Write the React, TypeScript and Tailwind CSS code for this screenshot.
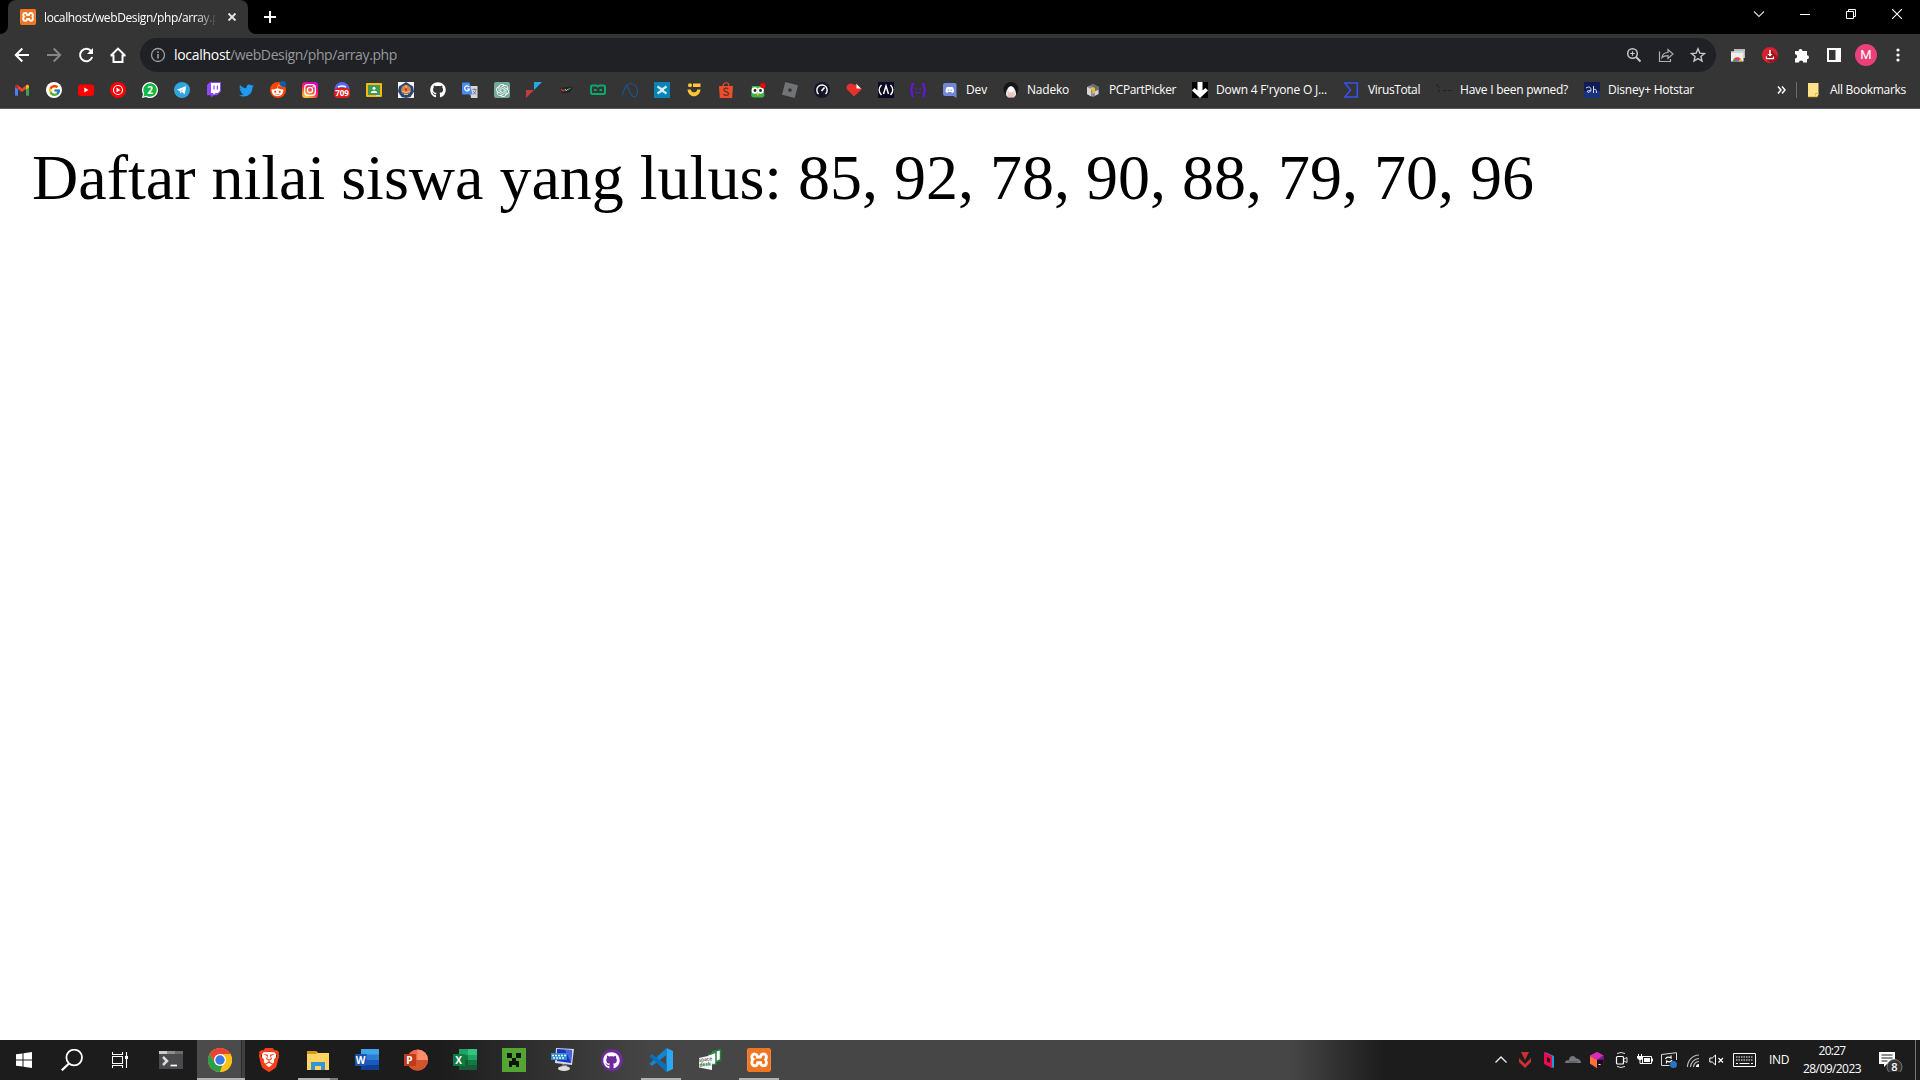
import React, { useLayoutEffect, useRef } from "react";
import { FcGoogle } from "react-icons/fc";
import { FaTwitter, FaGithub, FaRedditAlien } from "react-icons/fa";
import { SiXampp, SiOpenai, SiBrave } from "react-icons/si";

/** Single line of text whose tracking is adjusted so that it fills `w` pixels. */
function Fit({ w, className = "", children }: { w: number; className?: string; children: React.ReactNode }) {
  const ref = useRef<HTMLSpanElement>(null);
  useLayoutEffect(() => {
    const fit = () => {
      const el = ref.current;
      if (!el) return;
      el.style.letterSpacing = "0px";
      const n = (el.textContent || "").length;
      el.style.letterSpacing = (w - el.getBoundingClientRect().width) / n + "px";
    };
    fit();
    document.fonts?.ready.then(fit);
  }, [w]);
  return (
    <span ref={ref} className={"inline-block shrink-0 whitespace-pre " + className}>
      {children}
    </span>
  );
}

function Svg({ s = 16, h, vb, children }: { s?: number; h?: number; vb?: string; children: React.ReactNode }) {
  const hh = h ?? s;
  return (
    <svg width={s} height={hh} viewBox={vb ?? `0 0 ${s} ${hh}`} fill="none" className="block shrink-0">
      {children}
    </svg>
  );
}

function Slot({ children }: { children: React.ReactNode }) {
  return <div className="flex w-8 shrink-0 items-center justify-center">{children}</div>;
}

function Xampp({ s }: { s: number }) {
  return (
    <div className="shrink-0 rounded-[3px] bg-[linear-gradient(to_bottom,#f2802f_0%,#f2802f_10%,#fff_10%,#fff_90%,#e8681a_90%)]">
      <SiXampp size={s} color="#f07522" className="block" />
    </div>
  );
}

/* ---------- Tab strip ---------- */
function TabStrip() {
  return (
    <div className="flex h-[34px] bg-black text-white">
      <div className="flex w-2 items-end bg-[#353535]"><div className="h-full w-2 rounded-br-lg bg-black" /></div>
      <div className="flex w-[240px] items-center rounded-t-lg bg-[#353535] pl-3">
        <Xampp s={16} />
        <div className="ml-2 w-[173px] overflow-hidden pb-0.5 [mask-image:linear-gradient(to_right,#000_88%,transparent)]">
          <Fit w={175} className="text-[12px]">localhost/webDesign/php/array.p</Fit>
        </div>
        <div className="ml-[7px]">
          <Svg><path d="m4.500 4.500 7 7m0-7-7 7" stroke="#e4e4e4" strokeWidth="1.800" /></Svg>
        </div>
      </div>
      <div className="flex w-2 items-end bg-[#353535]"><div className="h-full w-2 rounded-bl-lg bg-black" /></div>
      <div className="ml-[6px] flex items-center">
        <Svg><path d="M8 2v12M2 8h12" stroke="#fff" strokeWidth="2" /></Svg>
      </div>
      <div className="ml-auto flex h-[28px] items-center">
        <div className="flex w-[46px] justify-center"><Svg s={12}><path d="m1 3.500 5 5 5-5" stroke="#ddd" strokeWidth="1.100" /></Svg></div>
        <div className="flex w-[46px] justify-center"><Svg s={10}><path d="M0 5.500h10" stroke="#fff" /></Svg></div>
        <div className="flex w-[46px] justify-center"><Svg s={10}><path d="M.5 2.500h7v7h-7zM2.500 2.500v-2h7v7h-2" stroke="#fff" /></Svg></div>
        <div className="flex w-[46px] justify-center"><Svg s={10}><path d="m0 0 10 10M10 0 0 10" stroke="#fff" strokeWidth="1.100" /></Svg></div>
      </div>
    </div>
  );
}

/* ---------- Toolbar ---------- */
function Toolbar() {
  return (
    <div className="flex h-[42px] items-center bg-[#353535] pl-[6px] pr-[6px]">
      <Slot><Svg><path d="M15 8H2M8.300 1.500 1.800 8l6.500 6.500" stroke="#fff" strokeWidth="2" /></Svg></Slot>
      <Slot><Svg><path d="M1 8h13M7.700 1.500 14.200 8l-6.500 6.500" stroke="#868686" strokeWidth="2" /></Svg></Slot>
      <Slot><Svg><path d="M13.200 4.200A6.200 6.200 0 1 0 14.200 10" stroke="#fff" strokeWidth="2" /><path d="M15 1v6H9z" fill="#fff" /></Svg></Slot>
      <Slot><Svg><path d="M3.500 7.500V15h9V7.500M.8 8.800 8 1.600l7.200 7.200M.5 8.500h3M12.500 8.500h3" stroke="#fff" strokeWidth="2" /></Svg></Slot>
      <div className="ml-[6px] flex h-[34px] w-[1576px] items-center rounded-full bg-[#202124] pl-[10px] pr-[2px]">
        <Svg><circle cx="8" cy="8" r="6.500" stroke="#9a9da1" strokeWidth="1.300" /><path d="M8 7v4.500M8 4.300v1.600" stroke="#9a9da1" strokeWidth="1.600" /></Svg>
        <div className="ml-2 flex text-[14px] leading-[34px]">
          <Fit w={56} className="text-white">localhost</Fit>
          <Fit w={167} className="text-[#96999d]">/webDesign/php/array.php</Fit>
        </div>
        <div className="ml-auto flex">
          <Slot><Svg><circle cx="6.500" cy="6.500" r="4.800" stroke="#c4c7ca" strokeWidth="1.500" /><path d="m10 10 4.500 4.500" stroke="#c4c7ca" strokeWidth="1.900" /><path d="M6.500 4.300v4.400M4.300 6.500h4.400" stroke="#c4c7ca" strokeWidth="1.200" /></Svg></Slot>
          <Slot><Svg><path d="M1.500 4.500v10h11V12M4 10.500c.5-3.500 2.500-5 6-5V2.500L15 7l-5 4.500V8.700c-3 0-4.500.3-6 1.800Z" stroke="#aeb1b5" strokeWidth="1.200" /></Svg></Slot>
          <Slot><Svg><path d="m8 1.800 1.800 4.300 4.700.4-3.600 3 1.100 4.600L8 11.600l-4 2.500 1.100-4.600-3.600-3 4.700-.4Z" stroke="#c4c7ca" strokeWidth="1.400" /></Svg></Slot>
        </div>
      </div>
      <div className="ml-[6px] flex items-center">
        <Slot><Svg><path d="M4 2h11v9H4z" fill="#b8bbbc" /><path d="M1 4.500h12.500v10H1z" fill="#eee" /><path d="M1 4.500h12.500V6H1z" fill="#cfd1d2" /><path d="M3 14.500a4.300 4.300 0 0 1 8.600 0Z" fill="#e94235" /><path d="M3 14.500a4.300 4.300 0 0 1 1.500-3l1.500 3Z" fill="#34a853" /><path d="M11.600 14.500a4.300 4.300 0 0 0-1.300-3l-2 3Z" fill="#fbbc04" /><path d="M5.300 14.500a2 2 0 0 1 4 0Z" fill="#4285f4" /></Svg></Slot>
        <Slot><Svg><circle cx="8" cy="8" r="8" fill="#d8232f" /><path d="m9 3 6.500 6.500A8 8 0 0 1 9 16l-5-4Z" fill="#981520" /><path d="M7.200 3h1.600v4h1.700L8 9.500 5.500 7h1.700Z" fill="#fff" /><path d="M4.500 9.500v2.200h7V9.500" stroke="#fff" strokeWidth="1.200" /></Svg></Slot>
        <Slot><Svg><path d="M1 4h3.500a2 2 0 1 1 4 0H13v4.200a2 2 0 1 1 0 4V15.500H9.200a2.100 2.100 0 1 0-4.200 0H1v-4a2.100 2.100 0 1 0 0-4.200Z" fill="#fff" /></Svg></Slot>
        <Slot><Svg s={14}><path d="M1 1h12v12H1z" stroke="#fff" strokeWidth="2" /><path d="M8.500 1h5v12h-5z" fill="#fff" /></Svg></Slot>
        <Slot><div className="flex h-[22px] w-[22px] shrink-0 items-center justify-center rounded-full bg-[#ec407a] text-[13px] text-white [font-family:Roboto,sans-serif]">M</div></Slot>
        <Slot><Svg s={4} h={14}><circle cx="2" cy="2" r="1.600" fill="#fff" /><circle cx="2" cy="7" r="1.600" fill="#fff" /><circle cx="2" cy="12" r="1.600" fill="#fff" /></Svg></Slot>
      </div>
    </div>
  );
}

/* ---------- Bookmarks ---------- */
const icons: React.ReactNode[] = [
  <Svg><path d="M1 4v9.500h3V7L8 10l4-3v6.500h3V4l-2-1.500L8 6.500l-5-4Z" fill="#ea4335" /><path d="M1 5v8.500h3V7Z" fill="#4285f4" /><path d="M15 5v8.500h-3V7Z" fill="#34a853" /><path d="m12 3.500 1.500-1L15 4v1.500L12 7.500Z" fill="#fbbc04" /><path d="M1 4l2-1.500L4 4v3.300L1 5.200Z" fill="#c5221f" /></Svg>,
  <div className="flex h-4 w-4 items-center justify-center rounded-full bg-white"><FcGoogle size={13} /></div>,
  <Svg><rect y="2.500" width="16" height="11.500" rx="2.500" fill="#f00" /><path d="M6.300 5.500v5l4.200-2.500Z" fill="#fff" /></Svg>,
  <Svg><circle cx="8" cy="8" r="8" fill="#f00" /><circle cx="8" cy="8" r="4.500" stroke="#fff" strokeWidth="1.200" /><path d="M6.500 5.600v4.800L10.500 8Z" fill="#fff" /></Svg>,
  <div className="relative h-4 w-4"><Svg><path d="M0 16 1 12A8 8 0 1 1 4 15Z" fill="#fff" /><path d="m1.500 14.500.8-3A6.700 6.700 0 1 1 4.500 13.700Z" fill="#12b83f" /></Svg><span className="absolute inset-0 text-center text-[10px] font-bold leading-4 text-white">2</span></div>,
  <Svg><circle cx="8" cy="8" r="8" fill="#2fa6df" /><path d="m2.800 7.800 9.400-3.700-1.500 8.200-3-2.200-1.500 1.500-.4-2.500Z" fill="#fff" /><path d="m5.800 9.100 4.500-3.200-3.300 4Z" fill="#a9d5ec" /></Svg>,
  <Svg><path d="M4 0h11v9.500l-4 3.800H7.500L5.300 16v-2.700H1V3Z" fill="#9146ff" /><path d="M5 1h9v7.800L12 11H9.500l-2 2v-2H5Z" fill="#fff" /><path d="M8 3.500v4M11.300 3.500v4" stroke="#9146ff" strokeWidth="1.200" /></Svg>,
  <FaTwitter size={15} color="#1d9bf0" />,
  <div className="relative h-4 w-4 overflow-visible rounded-full bg-[#ff4500]"><FaRedditAlien size={13} color="#fff" className="absolute left-[1px] top-[2px]" /><i className="absolute -top-px right-0 h-[6px] w-[6px] rounded-full bg-[#0b5fa8]" /></div>,
  <div className="h-4 w-4 rounded-[3px] bg-[radial-gradient(circle_at_25%_100%,#ffd24a_0%,#ff8b2b_30%,#fa1e63_60%,#d300c5_85%,#9b20e8_100%)]"><Svg><rect x="2.700" y="2.700" width="10.600" height="10.600" rx="3" stroke="#fff" strokeWidth="1.300" /><circle cx="8" cy="8" r="2.600" stroke="#fff" strokeWidth="1.300" /><circle cx="11.200" cy="4.800" r=".8" fill="#fff" /></Svg></div>,
  <div className="relative h-4 w-4"><Svg><circle cx="8" cy="7.500" r="7.500" fill="#5865f2" /><path d="M4 5q4-2 8 0" stroke="#fff" strokeWidth="1.500" /><rect y="6" width="16" height="10" rx="4" fill="#df1c1c" /></Svg><span className="absolute left-0 top-[6px] w-4 text-center text-[8px] font-bold leading-[10px] text-white">709</span></div>,
  <Svg><rect y="1" width="16" height="14" rx="1" fill="#f4b912" /><path d="M2 3h12v10H2z" fill="#409a55" /><circle cx="8" cy="6.300" r="1.500" fill="#fff" /><path d="M4.800 11c0-3 6.400-3 6.400 0Z" fill="#fff" /><path d="M10 13h4v1h-4z" fill="#d8d8d8" /></Svg>,
  <Svg><path d="M0 0h16v16H0z" fill="#f4f4f4" /><path d="m8 0 7 4.500 1 5L12.500 15 8 16l-4.500-1L0 9.500l1-5Z" fill="#24467d" /><circle cx="8" cy="8" r="4.900" fill="#d98445" /><path d="M5 7.500a3 3 0 0 0 6 0v4H5Z" fill="#4b6ba3" /><path d="M8 3v3M4.500 9q3.500 3 7 0M6 12.500h4" stroke="#f0c070" strokeWidth="1.200" /><path d="m8 5.500 1.300 2L8 9.500l-1.300-2Z" fill="#c8352f" /></Svg>,
  <FaGithub size={16} color="#fff" />,
  <Svg><path d="M7 4h8.500v12H9Z" fill="#d4d6d9" /><path d="M0 1.500Q0 .5 1 .5h6.500l3 12H1q-1 0-1-1Z" fill="#4b8bf5" /><path d="M7.200 5A2.500 2.500 0 1 0 7.500 7H5" stroke="#fff" strokeWidth="1.200" /><path d="M10.500 7.500h4M12.500 6.500v1M14 8c-1 3-2 4-3 4.500M11 9l3 3.500" stroke="#6f7780" strokeWidth=".9" /></Svg>,
  <div className="flex h-4 w-4 items-center justify-center rounded-[2px] bg-[#74aa9c]"><SiOpenai size={13} color="#fff" /></div>,
  <Svg><path d="M8 0h8L8 8Z" fill="#29a9e0" /><path d="M0 8h8l-8 8Z" fill="#c8393b" /></Svg>,
  <Svg><path d="m2 6 10-1.500 3 1-3 5-8 1Z" fill="#232323" /><path d="m3 7 2 2 2-1.500" stroke="#db3d3d" strokeWidth="1.100" /><path d="m7 7.500 1.500 1L10 7" stroke="#eee" /><path d="m9.500 8 3-2" stroke="#27a54a" strokeWidth="1.200" /></Svg>,
  <Svg><path d="M2.500 3.500h4l1.500 1 1.500-1h4a1.500 1.500 0 0 1 1.500 1.500v5.500a1.500 1.500 0 0 1-1.500 1.500h-11A1.500 1.500 0 0 1 1 10.500V5a1.500 1.500 0 0 1 1.500-1.500Z" stroke="#08aa6c" strokeWidth="2" /><path d="M4 8h2.500M9.500 8H12" stroke="#08aa6c" strokeWidth="1.800" /></Svg>,
  <Svg><path d="M.5 13C1.500 6.500 5 1.500 9 1.500c4 0 6.500 4.500 6.500 8.500s-2.500 5.500-4.500 4.500C8 13 7 6 4.500 3.500" stroke="#1b5488" strokeWidth="1.200" /></Svg>,
  <Svg><path d="M0 0h16v16H0z" fill="#0784b5" /><path d="M3.500 4.500 7 6.800h2l3.500-2.300M3.500 11.500 7 9.200h2l3.500 2.300" stroke="#d3ecf5" strokeWidth="2.200" /><path d="M6 6.500h4v3H6z" fill="#d3ecf5" /></Svg>,
  <Svg><circle cx="4" cy="3.300" r="2" fill="#ffc736" /><path d="M7 1.500h7.500V5H7z" fill="#ffc736" /><path d="M1.500 7.500h3.300c.5 3.800 6 3.800 6.500 0h3.200c-.8 9-12.200 9-13 0Z" fill="#ffc736" /></Svg>,
  <Svg><path d="M1 4h14l-.8 12H1.800Z" fill="#ee4d2d" /><path d="M5 4.500c0-5 6-5 6 0" stroke="#ee4d2d" strokeWidth="1.200" /><path d="M10.300 7C8.800 5.700 6 6 6 7.700c0 2.300 4.500 1.500 4.500 4 0 2-3.200 2.200-5 .6" stroke="#633126" strokeWidth="1.300" /></Svg>,
  <Svg><path d="M2 4h11l1.500 9.500Q14 15.500 12 15.500H3.500Q1 15.500 1.200 13Z" fill="#3bb54a" /><circle cx="4.800" cy="8.500" r="3.200" fill="#fff" /><circle cx="10.700" cy="8.500" r="3.200" fill="#fff" /><circle cx="5" cy="8.500" r="1.400" fill="#222" /><circle cx="10.500" cy="8.500" r="1.400" fill="#222" /><path d="m6.300 11 1.500 3 1.500-3Z" fill="#f9c333" /><circle cx="12.800" cy="3.500" r="2.700" fill="#f00" /></Svg>,
  <Svg><path d="M3.300 0 16 3.300 12.700 16 0 12.700Z" fill="#717375" /><path d="m6.800 6.300 3 .7-.7 3-3-.7Z" fill="#353535" /></Svg>,
  <Svg><circle cx="8" cy="8" r="8" fill="#141526" /><path d="M4.500 12A5.200 5.200 0 1 1 11.500 12" stroke="#fff" strokeWidth="1.400" /><path d="m7.500 9 3-3.500" stroke="#fff" strokeWidth="1.700" /></Svg>,
  <Svg><path d="M8 14.500 1 7.500C-1 4 3 0 6.500 2L9 3l2-2v5h5c0 1-1 2-2 3Z" fill="#e5322d" /><path d="m10.500 2 4.500 4.500h-4.500Z" fill="#fff" /></Svg>,
  <Svg><path d="M0 0h16v16H0z" fill="#0a0a23" /><path d="M3.500 3c-3 3-3 7 0 10M12.500 3c3 3 3 7 0 10M5.500 12 8 4l2.500 8" stroke="#fff" strokeWidth="1.500" /></Svg>,
  <Svg><path d="M4 2H3Q2 2 2 3.500V6L1 8l1 2v3q0 1.500 1.500 1.500M12 2h1q1 0 1 1.500V6l1 2-1 2v3q0 1.500-1.500 1.500" stroke="#6a10ff" strokeWidth="1.800" /><path d="M5 7h2M9 7h2M5.500 10q2.500 2 5 0" stroke="#5a1fd0" strokeWidth="1.200" /></Svg>,
];

const named: [React.ReactNode, string, number][] = [
  [<Svg><path d="M3 1h10q1.500 0 1.500 2v13l-3-2H3q-2 0-2-2V3q0-2 2-2Z" fill="#7289da" /><path d="M3.500 10c0-3 .8-5 2-5h4.500c1.200 0 2 2 2 5l-2 1-.8-1H6.300l-.8 1Z" fill="#fff" /><path d="M5.700 7.500h1.200v1.300H5.700zM8.600 7.500h1.200v1.300H8.600z" fill="#7289da" /></Svg>, "Dev", 21],
  [<Svg><circle cx="8" cy="7.500" r="7.500" fill="#151515" /><path d="M3 13C2.500 8 6 4 8 4s5.500 4 5 9l-2 2.500H5Z" fill="#e8e2e4" /><path d="M5 10.500h6V15H5z" fill="#f2c5bb" /><circle cx="8" cy="7.500" r="2.800" fill="#fafafa" /></Svg>, "Nadeko", 42],
  [<Svg><path d="m2 5 6-3 6 3v7l-6 3-6-3Z" fill="#8e9095" /><path d="m2 5 4 2v7.500L2 12Z" fill="#d4d5d7" /><path d="m5 3.500 5 3v3l4-2V5L8 2Z" fill="#6a6d72" /><path d="m5 6.500 3-1.500 2 1.500v4L7.500 12V8.500Z" fill="#f3bd2e" /><path d="m10 9.500 3-1.500v4l-3 1.500Z" fill="#d4d5d7" /></Svg>, "PCPartPicker", 67],
  [<Svg><path d="M0 0h16v16H0z" fill="#000" /><path d="M5.500 0h5v8.500l3-2.500L16 8.500 8 16 0 8.500 2.500 6l3 2.500Z" fill="#fff" /></Svg>, "Down 4 F'ryone O J...", 111],
  [<div className="ml-px"><Svg><path d="M.8 1h12.500v14H.8L6.500 8Z" stroke="#3453f4" strokeWidth="1.600" /></Svg></div>, "VirusTotal", 52],
  [<Svg><path d="M2 2 1 5M3.500 5v1M3.500 8 2.500 10M7 8.500h3.500M12 8.500h3.500" stroke="#222" strokeWidth="1.200" /></Svg>, "Have I been pwned?", 108],
  [<Svg><path d="M0 0h16v16H0z" fill="#101c55" /><path d="M0 9h16v7H0z" fill="#173379" /><path d="M2 6q5-3 5 2.500Q5 12 3 9.500 4 7.500 7 9M9.500 4v7M9.500 8q3-2.500 3 3" stroke="#d5dbf0" /></Svg>, "Disney+ Hotstar", 86],
];

function Bookmarks() {
  return (
    <div className="flex h-[33px] items-center border-b border-[#5c5c5c] bg-[#353535] pb-1 pl-[6px] pr-[14px] text-[12px] text-white">
      {icons.map((icon, i) => <Slot key={i}>{icon}</Slot>)}
      <div className="ml-2 flex gap-4">
        {named.map(([icon, label, w]) => (
          <div key={label} className="flex items-center gap-2">{icon}<Fit w={w}>{label}</Fit></div>
        ))}
      </div>
      <div className="ml-auto flex items-center">
        <Svg s={10}><path d="m1 1.500 3 3.500-3 3.500M5 1.500 8 5 5 8.500" stroke="#fff" strokeWidth="1.500" /></Svg>
        <i className="ml-[9px] h-4 w-px bg-[#6c6c6c]" />
        <div className="ml-[9px] mr-[8px]"><Svg><path d="M2 1h10.500v12L11 15H2Z" fill="#ffe28a" /><path d="M9.500 13.500v-2h3M2 14.700h9.500" stroke="#e6b93e" /></Svg></div>
        <Fit w={76}>All Bookmarks</Fit>
      </div>
    </div>
  );
}

/* ---------- Taskbar ---------- */
function Office({ letter, kind }: { letter: string; kind: "w" | "p" | "x" }) {
  return (
    <div className="relative h-6 w-6">
      <Svg s={24}>
        {kind === "w" && <><path d="M6 1h18v6H6z" fill="#41a5ee" /><path d="M6 6.500h18V12H6z" fill="#2b7cd3" /><path d="M6 12h18v5.500H6z" fill="#185abd" /><path d="M6 17h18v5H6z" fill="#103f91" /><path d="M0 6h11.500v12H0z" fill="#1a54b2" /></>}
        {kind === "p" && <><circle cx="13.500" cy="12" r="10.500" fill="#ed6c47" /><path d="M13.500 1.500A10.500 10.500 0 0 1 24 12H13.500Z" fill="#ff8f6b" /><path d="M24 12a10.500 10.500 0 0 1-21 0Z" fill="#d35230" /><path d="M0 6h12v12H0z" fill="#c13b1b" /></>}
        {kind === "x" && <><path d="M6 1h9v10H6z" fill="#21a366" /><path d="M15 1h9v6h-9z" fill="#33c481" /><path d="M15 7h9v5h-9z" fill="#21a366" /><path d="M6 7h9v5H6zM15 12h9v5h-9z" fill="#107c41" /><path d="M6 12h9v5H6zM6 17h18v5H6z" fill="#185c37" /><path d="M0 6h12v12H0z" fill="#107c41" /></>}
      </Svg>
      <span className="absolute left-0 top-[6px] w-3 text-center text-[10px] font-bold leading-3 text-white">{letter}</span>
    </div>
  );
}

const apps: [React.ReactNode, string][] = [
  [<Svg s={24}><path d="M0 3h24v18H0z" fill="#4a4a4d" /><path d="M0 3h8v3H0z" fill="#ccc" /><path d="M8 3h8v3H8z" fill="#8e8e8e" /><path d="M16 3h8v3h-8z" fill="#6b6b6b" /><path d="m4 9 4 4-4 4" stroke="#ddd" strokeWidth="2.500" /><path d="M11.500 17.500H18" stroke="#fff" strokeWidth="1.700" /></Svg>, ""],
  [<Svg s={24}><circle cx="12" cy="12" r="12" fill="#fbc116" /><path d="M1.600 6A12 12 0 0 1 22.400 6H12L6.800 15Z" fill="#ea4335" /><path d="M1.600 6 6.800 15l7.500 2L12 24A12 12 0 0 1 1.600 6Z" fill="#2b9e49" /><path d="M12 24 17.200 15 14 10V6h8.400A12 12 0 0 1 12 24Z" fill="#fbc116" /><circle cx="12" cy="12" r="6" fill="#fff" /><circle cx="12" cy="12" r="4.700" fill="#3b78e7" /></Svg>, "chrome"],
  [<div className="relative flex h-6 w-6 items-center justify-center"><i className="absolute left-[5px] top-[4px] h-4 w-[14px] rounded-b-full bg-white" /><SiBrave size={24} color="#f9401b" className="relative" /></div>, ""],
  [<Svg s={24}><path d="M1 3h9l2 2h11v17H1z" fill="#ffd461" /><path d="M1 3h9l1 2-1 1H1z" fill="#d99a12" /><path d="M5 22v-8h14v8h-4v-4H9v4Z" fill="#3594d4" /></Svg>, "stack"],
  [<Office letter="W" kind="w" />, ""],
  [<Office letter="P" kind="p" />, ""],
  [<Office letter="X" kind="x" />, ""],
  [<Svg s={24}><path d="M0 0h24v24H0z" fill="#53a534" /><path d="M5 5h5v5H5zM14 5h5v5h-5zM10 10h4v3h3v6h-3v-2h-4v2H7v-6h3z" fill="#0b1407" /></Svg>, ""],
  [<Svg s={24}><path d="m5 0 18 1-2 16-17-2Z" fill="#d3d7df" /><path d="m6 1 15 1-1 13-14-2Z" fill="#1634c5" /><path d="m14 2 7 0-1 13Z" fill="#4865dd" /><path d="M0 5h16v7H0z" fill="#338bcc" /><path d="M1 7.500h14M2 10h12" stroke="#e2f1ff" strokeWidth="1.300" strokeDasharray="2 1" /><path d="m11 16 5 1v3h-4Z" fill="#888" /><ellipse cx="13" cy="20.500" rx="6" ry="2.500" fill="#dedede" /></Svg>, ""],
  [<div className="flex h-[22px] w-[22px] items-center justify-center rounded-full bg-[#6e2b9c]"><FaGithub size={17} color="#fff" /></div>, ""],
  [<Svg s={24}><path d="m17.500 0 6.500 3v18l-6.500 3Z" fill="#2aa9f2" /><path d="M17.500 0v7L3 18l-2.500-2.300Z" fill="#1684cf" /><path d="M17.500 24v-7L3 6 .5 8.300Z" fill="#0a72ba" /></Svg>, "under"],
  [<div className="relative h-6 w-6"><Svg s={24}><path d="m14 4 8.500-2.500V12l-4 1.500" fill="#fff" stroke="#22813b" strokeWidth="1.500" /><path d="m10 7 8-3v12l-3 1" fill="#fff" stroke="#22813b" strokeWidth="1.500" /><path d="m1 10 13-3v15L1 19.500Z" fill="#f6f6f6" /></Svg><span className="absolute left-[1px] top-[9px] w-[13px] -rotate-6 text-[5px] leading-[5px] text-[#222]">space<br /><b className="text-[#22813b]">desk</b></span></div>, ""],
  [<Xampp s={24} />, "under"],
];

const tray: React.ReactNode[] = [
  <Svg><path d="M2.500 10.500 8 5l5.500 5.500" stroke="#eee" strokeWidth="1.300" /></Svg>,
  <Svg><path d="M4 0h8L8 8Z" fill="#cc3035" /><path d="m2 6 6 6 6-6v4l-6 6-6-6Z" fill="#cc3035" /></Svg>,
  <Svg><path d="m4 0 9 4v12l-4-1Z" fill="#1b9cde" /><path d="m3 0 8 4v12l-8-4Z" fill="#f4064c" /><path d="m6 5 3 1.500V11L6 9.500Z" fill="#1c1c1c" /></Svg>,
  <Svg><path d="M0 11c0-3 3-3 4-2.500C4 3 10 3 11 6.500c3 0 5 2 5 4.500Z" fill="#74777b" /><path d="M4 10h8" stroke="#4c4e50" /></Svg>,
  <Svg><path d="m8 0 6.500 3.500v8L8 16l-7-4.500v-8Z" fill="#f32b70" /><path d="m1 4 7 4v8l-7-4.500Z" fill="#ff713b" /><path d="m8 0 6.500 3.500L8 8 1 4Z" fill="#d72bb8" /><path d="m8 8 6.500-4.500v8L8 16Z" fill="#160b1f" /><path d="m8 8 6.500-4.500v4Z" fill="#7a1e9e" /><path d="M9.500 12.500h2" stroke="#fff" /></Svg>,
  <Svg><rect x="3.500" y="4.500" width="7" height="7.500" rx="1" stroke="#fff" strokeWidth="1.200" /><path d="m11 7 3-1.500v5L11 9M4 1.500q4-2 8 0M4 14.500q4 2 8 0" stroke="#ddd" /></Svg>,
  <Svg><path d="M5.500 4.500h9v7h-9z" stroke="#fff" /><path d="M7 6h6v4H7zM15 6.500h1v3h-1z" fill="#fff" /><path d="M1.500 2v2M4.500 2v2M3 7v4.500h3" stroke="#fff" /><path d="M0 4h6v2L4 8H2L0 6Z" fill="#fff" /></Svg>,
  <Svg><path d="M15.500 8V.7L.5 2.500v11h8" stroke="#ddd" /><path d="M4.500 7q1.500-3 5.500-1V3.500M11 8q-1.500 3-5.500 1v2.500" stroke="#fff" strokeWidth="1.200" /><circle cx="12.500" cy="12.500" r="3.500" fill="#2775c5" /></Svg>,
  <Svg><path d="M2.500 15A12 12 0 0 1 14 3M5.500 15A9 9 0 0 1 14 6.500M8.500 15A6 6 0 0 1 14 9.500" stroke="#bbb" strokeWidth="1.200" /><path d="M11 15a3 3 0 0 1 3-3v3Z" fill="#fff" /></Svg>,
  <Svg><path d="M.8 6h2.500L6.500 3v10L3.300 10H.8Z" stroke="#fff" /><path d="m9.500 6 4.500 4.500M14 6l-4.500 4.500" stroke="#fff" strokeWidth="1.200" /></Svg>,
];

function Taskbar() {
  return (
    <div className="flex h-10 shrink-0 items-center bg-[linear-gradient(to_right,#1c1c1c_0px,#1c1c1c_440px,#464646_650px,#464646_1290px,#1c1c1c_1385px)] text-[12px] text-white">
      <div className="flex w-12 shrink-0 justify-center"><Svg><path d="M0 2.300 6.500 1.400v6.100H0ZM7.500 1.200 16 0v7.500H7.500ZM0 8.500h6.500v6.100L0 13.700ZM7.500 8.500H16V16l-8.500-1.200Z" fill="#fff" /></Svg></div>
      <div className="flex w-12 shrink-0 justify-center"><Svg s={22}><circle cx="13.200" cy="8.500" r="7.800" stroke="#fff" strokeWidth="1.800" /><path d="M8 14.500.8 21.300" stroke="#fff" strokeWidth="2.200" /></Svg></div>
      <div className="flex w-[51px] shrink-0 justify-center pr-[3px]"><Svg><path d="M.5 4.500h10v7H.5zM.5 0v2.500h10V0M.5 16v-2.500h10V16M14.500 0v16" stroke="#fff" strokeWidth="1.100" /><path d="M13 4h3v3h-3z" fill="#fff" /></Svg></div>
      {apps.map(([icon, state], i) => (
        <div key={i} className={"relative flex h-10 w-[49px] shrink-0 items-center justify-center pr-[2px] " + (state === "chrome" ? "bg-[linear-gradient(to_right,#0000_0px,#0000_1px,#4b4b4b_1px,#4b4b4b_45px,#2c2c2c_45px,#2c2c2c_46px,#404040_46px)]" : "")}>
          {icon}
          {state === "chrome" && <i className="absolute bottom-0 left-px h-[2px] w-12 bg-[#b4b2b0]" />}
          {state === "under" && <i className="absolute bottom-0 left-1 h-[2px] w-10 bg-[#b4b2b0]" />}
          {state === "stack" && <i className="absolute bottom-0 left-1 h-[2px] w-10 bg-[linear-gradient(to_right,#b4b2b0_32px,#7c7a78_32px)]" />}
        </div>
      ))}
      <div className="ml-auto flex items-center">
        {tray.map((icon, i) => <div key={i} className="flex w-6 shrink-0 justify-center">{icon}</div>)}
        <div className="ml-1"><Svg s={23} h={14}><path d="M.5.5h22v13H.5z" stroke="#fff" /><path d="M3 4h17M3 7h17" stroke="#fff" strokeWidth="1.200" strokeDasharray="1.500 1" /><path d="M3 10.500h2M6.500 10.500h10M18 10.500h2" stroke="#fff" /></Svg></div>
        <Fit w={20} className="ml-[13px]">IND</Fit>
        <div className="ml-[14px] flex w-[58px] flex-col items-center leading-[18px]">
          <Fit w={27}>20:27</Fit>
          <Fit w={58}>28/09/2023</Fit>
        </div>
        <div className="relative ml-[18px] h-6 w-6">
          <Svg s={24}><path d="M0 4h16v12H8l-3 3v-3H0Z" fill="#fff" /><path d="M2.500 7h11M2.500 10h11M2.500 13h6" stroke="#1c1c1c" /><circle cx="15.500" cy="19" r="7.500" fill="#343434" stroke="#777" /></Svg>
          <span className="absolute left-[8px] top-[11px] w-[15px] text-center text-[11px] font-semibold leading-4">8</span>
        </div>
        <i className="ml-3 h-10 w-px bg-[#777]" />
        <i className="w-1" />
      </div>
    </div>
  );
}

export default function App() {
  return (
    <div className="flex h-[1080px] w-[1920px] flex-col overflow-hidden bg-white [font-family:'Open_Sans','Noto_Sans',sans-serif]">
      <TabStrip />
      <Toolbar />
      <Bookmarks />
      <main className="flex-1 px-8 pt-8 text-black [font-family:'Liberation_Serif',serif]">
        <p className="whitespace-nowrap text-[64px] leading-[74px]">Daftar nilai siswa yang lulus: 85, 92, 78, 90, 88, 79, 70, 96</p>
      </main>
      <Taskbar />
    </div>
  );
}
